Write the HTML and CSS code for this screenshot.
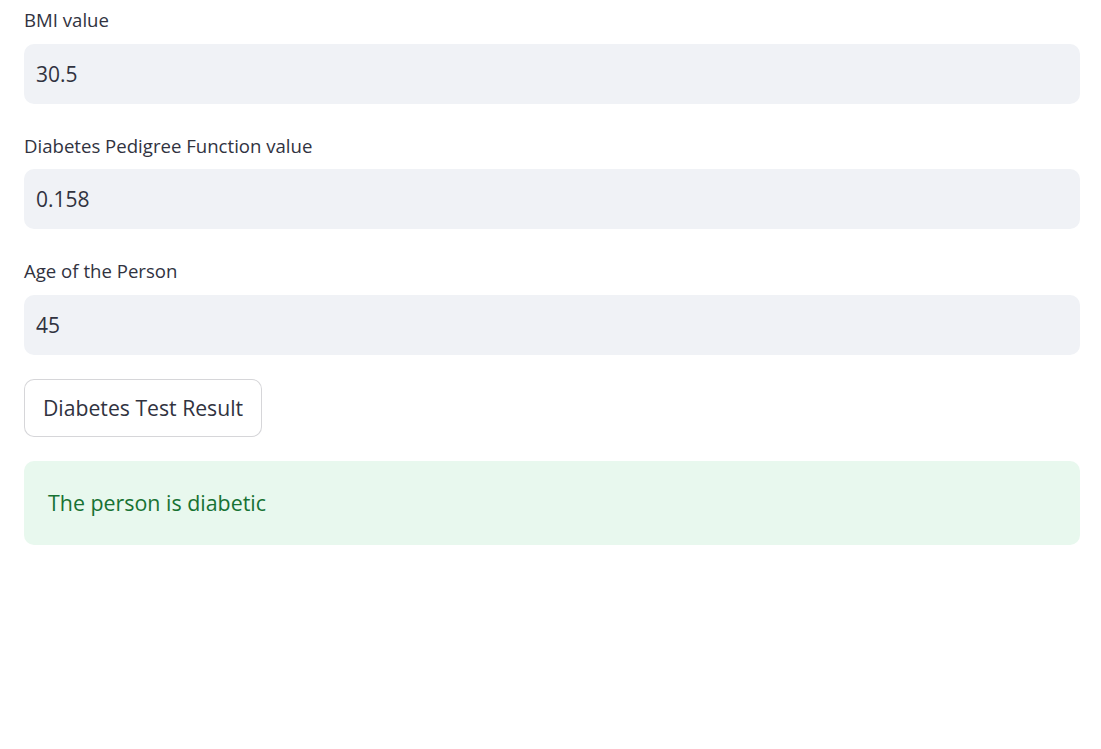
FILE: index.html
```html
<!DOCTYPE html>
<html lang="en">
<head>
<meta charset="utf-8">
<title>Diabetes Prediction</title>
<link rel="stylesheet" href="styles.css">
</head>
<body>
<main class="main">
  <div class="field">
    <label class="field-label" for="bmi">BMI value</label>
    <input class="field-input" id="bmi" type="text" value="30.5">
  </div>
  <div class="field">
    <label class="field-label" for="dpf">Diabetes Pedigree Function value</label>
    <input class="field-input" id="dpf" type="text" value="0.158">
  </div>
  <div class="field">
    <label class="field-label" for="age">Age of the Person</label>
    <input class="field-input" id="age" type="text" value="45">
  </div>
  <div class="actions">
    <button class="btn" type="button">Diabetes Test Result</button>
  </div>
  <div class="alert alert-success">The person is diabetic</div>
</main>
</body>
</html>
```

FILE: styles.css
```css
* { box-sizing: border-box; }

html, body {
  margin: 0;
  padding: 0;
  background: #ffffff;
}

body {
  font-family: "Open Sans", "Noto Sans", "Liberation Sans", sans-serif;
  color: #31333f;
}

.main {
  display: flex;
  flex-direction: column;
  gap: 24px;
  padding: 2px 21px 0 24px;
}

.field {
  display: flex;
  flex-direction: column;
}

.field-label {
  font-size: 18.6px;
  line-height: 28px;
  margin: 4px 0 9.5px;
  color: #31333f;
}

.field-input {
  height: 60px;
  border: none;
  outline: none;
  border-radius: 10px;
  background: #f0f2f6;
  padding: 0 12px;
  font-family: inherit;
  font-size: 21px;
  color: #31333f;
}

.actions {
  display: flex;
}

.btn {
  height: 58px;
  padding: 0 18px;
  background: #ffffff;
  border: 1px solid rgba(49, 51, 63, 0.2);
  border-radius: 10px;
  font-family: inherit;
  font-size: 21.2px;
  color: #31333f;
}

.alert {
  height: 84px;
  display: flex;
  align-items: center;
  padding: 0 24px;
  border-radius: 10px;
  font-size: 21.4px;
}

.alert-success {
  background: #e8f8ee;
  color: #177233;
}
```
